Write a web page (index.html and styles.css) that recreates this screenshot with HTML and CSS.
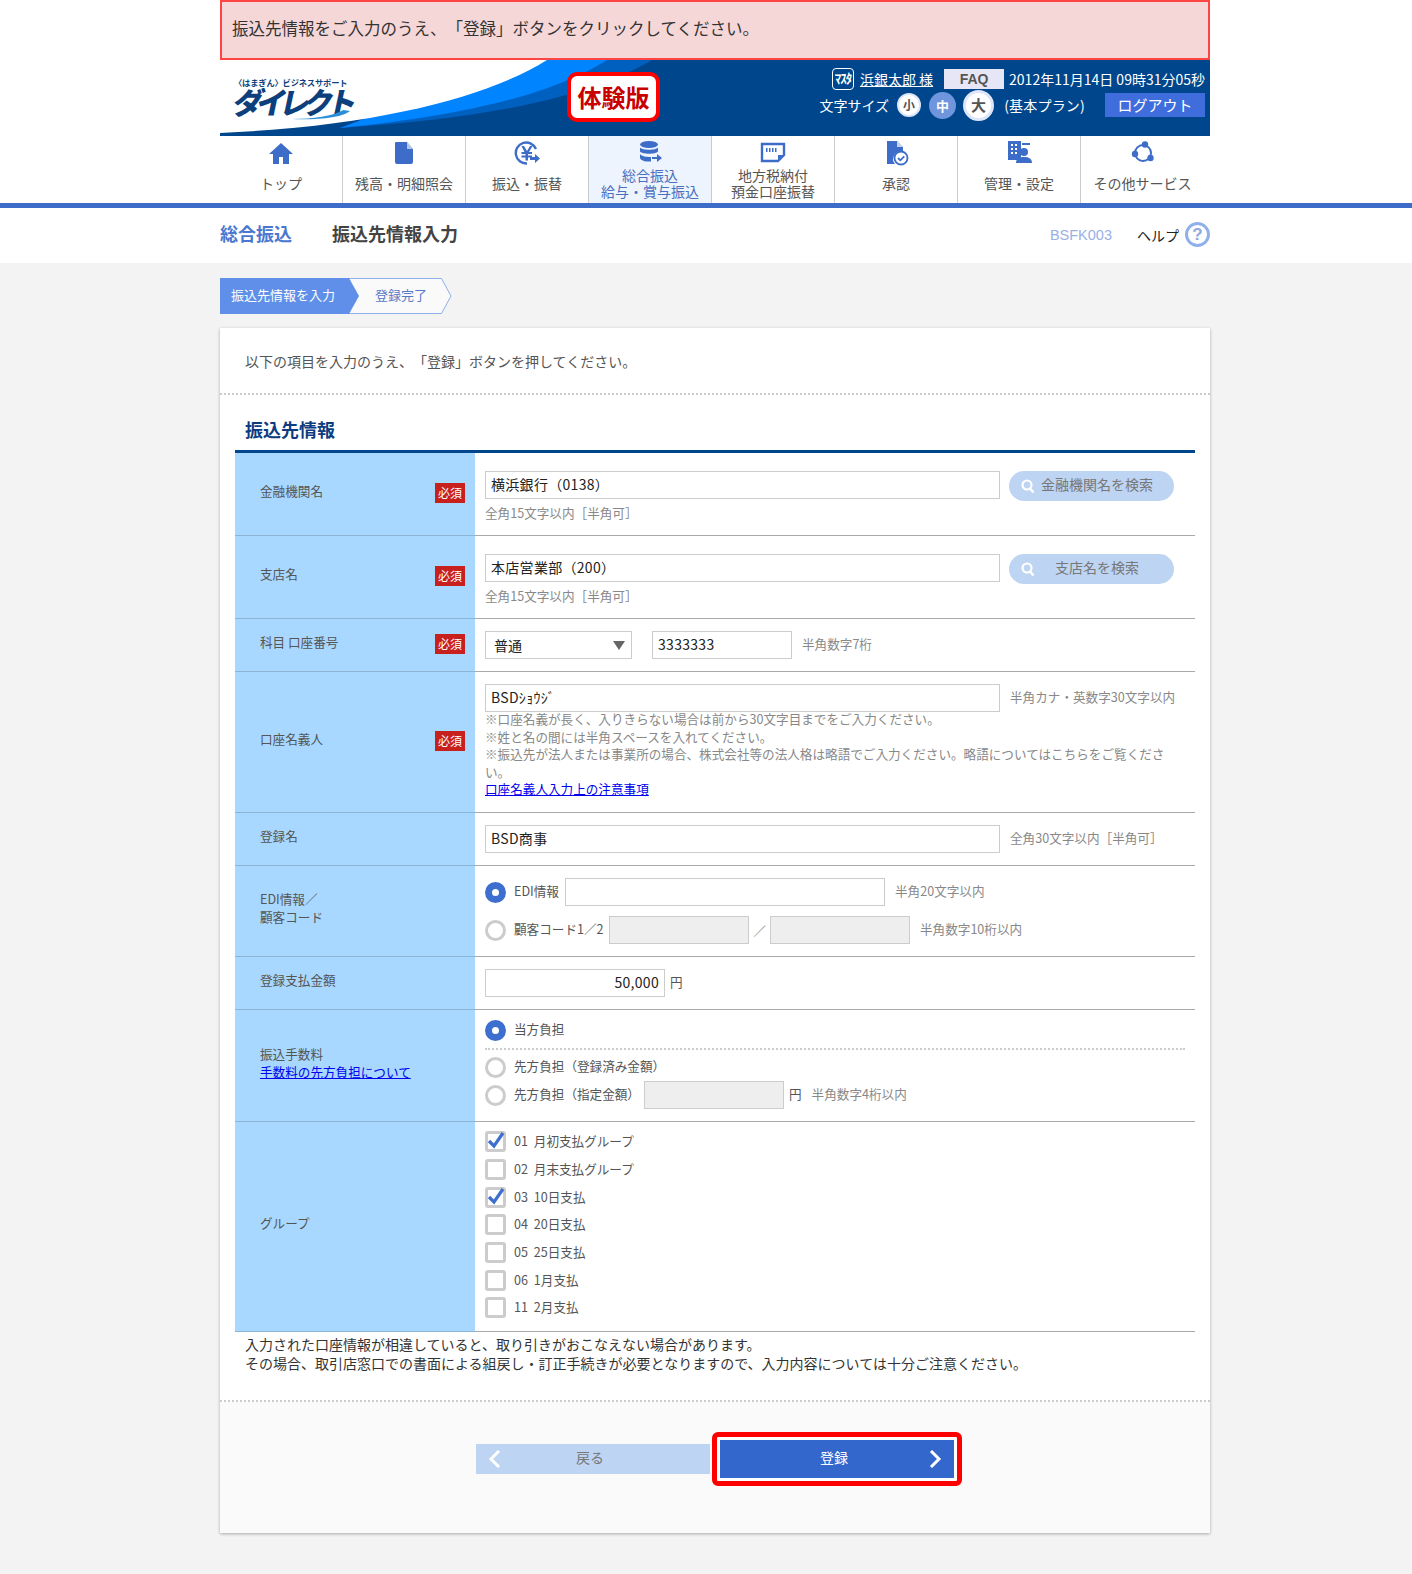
FILE: index.html
```html
<!DOCTYPE html>
<html lang="ja">
<head>
<meta charset="UTF-8">
<title>振込先情報入力</title>
<link rel="stylesheet" href="styles.css">
</head>
<body>
<div class="top">
    <div class="banner">振込先情報をご入力のうえ、「登録」ボタンをクリックしてください。</div>
    <header class="header">
        <svg class="swoosh" width="990" height="76" viewBox="0 0 990 76">
            <path fill="#0060c0" d="M300 0H432C380 30 300 56 120 68Z"/>
            <path fill="#0084ff" d="M300 0H387C340 30 260 54 120 68Z"/>
            <path fill="#fff" d="M0 0H327C270 36 160 66 0 73Z"/>
        </svg>
        <div class="logo">
            <div class="logo-small">〈はまぎん〉ビジネスサポート</div>
            <div class="logo-big">ダイレクト</div>
            <svg class="logo-line" width="58" height="10" viewBox="0 0 70 10" preserveAspectRatio="none"><path fill="#2a8fd8" d="M0 9C25 9 50 6 62 0L70 1C60 8 30 10 0 9Z"/></svg>
        </div>
        <div class="trial">体験版</div>
        <div class="header-right">
            <div class="header-row">
                <span class="master">ﾏｽﾀ</span>
                <a class="user" href="#">浜銀太郎 様</a>
                <span class="faq">FAQ</span>
                <span class="date">2012年11月14日 09時31分05秒</span>
            </div>
            <div class="header-row header-row2">
                <span>文字サイズ</span>
                <span class="size size-s">小</span>
                <span class="size size-m">中</span>
                <span class="size size-l">大</span>
                <span class="plan">(基本プラン)</span>
                <span class="logout">ログアウト</span>
            </div>
        </div>
    </header>
    <nav class="nav">
        <a class="nav-item">
            <svg class="nav-icon" viewBox="0 0 26 26"><path d="M13 3L1 14h4v10h6v-7h4v7h6V14h4z"/></svg>
            <span>トップ</span>
        </a>
        <a class="nav-item">
            <svg class="nav-icon" viewBox="0 0 26 26"><path d="M5 2h11l6 7v13a2 2 0 0 1-2 2H6a2 2 0 0 1-2-2V3a1 1 0 0 1 1-1z"/><path fill="#fff" d="M16 2v7h6z" opacity=".6"/></svg>
            <span>残高・明細照会</span>
        </a>
        <a class="nav-item">
            <svg class="nav-icon" viewBox="0 0 26 26"><path fill="none" stroke="#3e6cc9" stroke-width="2.4" d="M22 9A10.500 10.500 0 1 0 13 23.500"/><path d="M7.500 6h2.500l3 5 3-5h2.500l-3.500 6h3v2h-4v1.500h4v2h-4v3h-2.500v-3h-4v-2h4V14h-4v-2h3z"/><path d="M16 17h5v-3l5 4.500-5 4.500v-3h-5z"/></svg>
            <span>振込・振替</span>
        </a>
        <a class="nav-item nav-item-on">
            <svg class="nav-icon" viewBox="0 0 26 26"><ellipse cx="12" cy="4.500" rx="9" ry="3.500"/><path d="M3 7.500c2 3 16 3 18 0v4c-2 3-16 3-18 0zM3 14c2 3 9 3 11 3v4.500C10 22 4 21 3 18z"/><path d="M15 17h5v-3l5 4-5 4v-3h-5z"/></svg>
            <span>総合振込<br>給与・賞与振込</span>
        </a>
        <a class="nav-item">
            <svg class="nav-icon" viewBox="0 0 26 26"><path fill="none" stroke="#3e6cc9" stroke-width="2.400" d="M2 4h22v11l-6 6H2z"/><path d="M18 21v-6h6zM6 8h1.500v4H6zM9 8h1.500v4H9zM12 8h1.500v4H12zM15 8h1.500v4H15z"/></svg>
            <span>地方税納付<br>預金口座振替</span>
        </a>
        <a class="nav-item">
            <svg class="nav-icon" viewBox="0 0 26 26"><path d="M4 1h10l6 6v5a7.500 7.500 0 0 0-8 12H4z"/><path fill="#fff" d="M14 1v6h6z" opacity=".7"/><circle cx="18" cy="18" r="6.500" fill="none" stroke="#3e6cc9" stroke-width="1.800"/><path fill="none" stroke="#3e6cc9" stroke-width="1.800" d="M15 18l2.300 2.300 4-4"/></svg>
            <span>承認</span>
        </a>
        <a class="nav-item">
            <svg class="nav-icon" viewBox="0 0 26 26"><path d="M2 1h13v19H2z"/><path fill="#fff" d="M5 4h2v2H5zM9 4h2v2H9zM5 8h2v2H5zM9 8h2v2H9zM5 12h2v2H5zM9 12h2v2H9z"/><circle cx="18" cy="12" r="4"/><path d="M10 23c0-5 4-6 8-6s8 1 8 6z"/><path d="M16 3h8v2h-8z"/></svg>
            <span>管理・設定</span>
        </a>
        <a class="nav-item">
            <svg class="nav-icon" viewBox="0 0 26 26"><circle cx="13" cy="13" r="8" fill="none" stroke="#3e6cc9" stroke-width="2"/><circle cx="15" cy="4.500" r="3.200"/><circle cx="20.500" cy="18" r="3.200"/><circle cx="5" cy="14" r="3.200"/></svg>
            <span>その他サービス</span>
        </a>
    </nav>
    <div class="nav-line"></div>
    <div class="title-bar">
        <div class="title-in">
            <span class="title-cat">総合振込</span>
            <span class="title-main">振込先情報入力</span>
            <span class="screen-id">BSFK003</span>
            <span class="help">ヘルプ</span>
            <span class="help-icon">?</span>
        </div>
    </div>
</div>
<div class="steps">
    <svg class="steps-bg" width="232" height="36" viewBox="0 0 232 36">
        <path fill="#fafafa" stroke="#8fb0ea" d="M120 .5H221.500L231 18 221.500 35.500H120z"/>
        <path fill="#5f8fe8" d="M0 0H129L139 18 129 36H0z"/>
    </svg>
    <span class="step step-on">振込先情報を入力</span>
    <span class="step">登録完了</span>
</div>
<main class="card">
    <p class="intro">以下の項目を入力のうえ、「登録」ボタンを押してください。</p>
    <h2 class="section">振込先情報</h2>
    <div class="form">
        <div class="row">
            <div class="head"><span>金融機関名</span><em class="req">必須</em></div>
            <div class="cell">
                <div class="line line-search">
                    <input class="text text-long" value="横浜銀行（0138）">
                    <button class="search"><svg width="16" height="16" viewBox="0 0 16 16"><circle cx="7" cy="7" r="4.500" fill="none" stroke="#fff" stroke-width="2.200"/><path stroke="#fff" stroke-width="2.400" d="M10 10.500l3.500 4"/></svg><span>金融機関名を検索</span></button>
                </div>
                <div class="hint hint-under">全角15文字以内［半角可］</div>
            </div>
        </div>
        <div class="row">
            <div class="head"><span>支店名</span><em class="req">必須</em></div>
            <div class="cell">
                <div class="line line-search">
                    <input class="text text-long" value="本店営業部（200）">
                    <button class="search"><svg width="16" height="16" viewBox="0 0 16 16"><circle cx="7" cy="7" r="4.500" fill="none" stroke="#fff" stroke-width="2.200"/><path stroke="#fff" stroke-width="2.400" d="M10 10.500l3.500 4"/></svg><span>支店名を検索</span></button>
                </div>
                <div class="hint hint-under">全角15文字以内［半角可］</div>
            </div>
        </div>
        <div class="row">
            <div class="head"><span>科目 口座番号</span><em class="req">必須</em></div>
            <div class="cell cell-tight">
                <div class="line">
                    <div class="select">普通<i class="select-arrow"></i></div>
                    <input class="text text-num" value="3333333">
                    <span class="hint">半角数字7桁</span>
                </div>
            </div>
        </div>
        <div class="row">
            <div class="head"><span>口座名義人</span><em class="req">必須</em></div>
            <div class="cell cell-tight">
                <div class="line">
                    <input class="text text-long" value="BSDｼｮｳｼﾞ">
                    <span class="hint">半角カナ・英数字30文字以内</span>
                </div>
                <div class="notes">
                    ※口座名義が長く、入りきらない場合は前から30文字目までをご入力ください。<br>
                    ※姓と名の間には半角スペースを入れてください。<br>
                    ※振込先が法人または事業所の場合、株式会社等の法人格は略語でご入力ください。略語についてはこちらをご覧ください。<br>
                    <a href="#">口座名義人入力上の注意事項</a>
                </div>
            </div>
        </div>
        <div class="row">
            <div class="head"><span>登録名</span></div>
            <div class="cell cell-tight">
                <div class="line">
                    <input class="text text-long" value="BSD商事">
                    <span class="hint">全角30文字以内［半角可］</span>
                </div>
            </div>
        </div>
        <div class="row">
            <div class="head"><span>EDI情報／<br>顧客コード</span></div>
            <div class="cell cell-tight cell-stack">
                <div class="line line-radio">
                    <i class="radio radio-on"></i>
                    <span class="label label-edi">EDI情報</span>
                    <input class="text text-edi">
                    <span class="hint">半角20文字以内</span>
                </div>
                <div class="line line-radio">
                    <i class="radio"></i>
                    <span class="label label-code">顧客コード1／2</span>
                    <input class="text text-num off" disabled>
                    <span class="slash">／</span>
                    <input class="text text-num off" disabled>
                    <span class="hint">半角数字10桁以内</span>
                </div>
            </div>
        </div>
        <div class="row">
            <div class="head"><span>登録支払金額</span></div>
            <div class="cell cell-tight">
                <div class="line">
                    <input class="text text-amount" value="50,000">
                    <span class="label yen">円</span>
                </div>
            </div>
        </div>
        <div class="row">
            <div class="head"><span>振込手数料<br><a href="#">手数料の先方負担について</a></span></div>
            <div class="cell cell-fee">
                <div class="line line-radio line-short">
                    <i class="radio radio-on"></i>
                    <span class="label">当方負担</span>
                </div>
                <div class="dots"></div>
                <div class="line line-radio line-short">
                    <i class="radio"></i>
                    <span class="label">先方負担（登録済み金額）</span>
                </div>
                <div class="line line-radio line-fee">
                    <i class="radio"></i>
                    <span class="label label-fee">先方負担（指定金額）</span>
                    <input class="text text-num off" disabled>
                    <span class="label yen">円</span>
                    <span class="hint">半角数字4桁以内</span>
                </div>
            </div>
        </div>
        <div class="row">
            <div class="head"><span>グループ</span></div>
            <div class="cell cell-groups">
                <div class="group"><i class="check"><svg width="20" height="20" viewBox="0 0 20 20"><path fill="none" stroke="#3e6fce" stroke-width="3.200" d="M3 10l5 5 9-13"/></svg></i>01 月初支払グループ</div>
                <div class="group"><i class="check"></i>02 月末支払グループ</div>
                <div class="group"><i class="check"><svg width="20" height="20" viewBox="0 0 20 20"><path fill="none" stroke="#3e6fce" stroke-width="3.200" d="M3 10l5 5 9-13"/></svg></i>03 10日支払</div>
                <div class="group"><i class="check"></i>04 20日支払</div>
                <div class="group"><i class="check"></i>05 25日支払</div>
                <div class="group"><i class="check"></i>06 1月支払</div>
                <div class="group"><i class="check"></i>11 2月支払</div>
            </div>
        </div>
    </div>
    <p class="caution">入力された口座情報が相違していると、取り引きがおこなえない場合があります。<br>その場合、取引店窓口での書面による組戻し・訂正手続きが必要となりますので、入力内容については十分ご注意ください。</p>
    <div class="card-foot">
        <button class="btn btn-back"><svg width="14" height="18" viewBox="0 0 14 18"><path fill="none" stroke="#fff" stroke-width="3" d="M11 1L3 9l8 8"/></svg><span>戻る</span></button>
        <div class="btn-mark">
            <button class="btn btn-next"><span>登録</span><svg width="14" height="18" viewBox="0 0 14 18"><path fill="none" stroke="#fff" stroke-width="3" d="M3 1l8 8-8 8"/></svg></button>
        </div>
    </div>
</main>
</body>
</html>
```

FILE: styles.css
```css
* {
    box-sizing: border-box;
    text-spacing-trim: space-all;
}
body {
    margin: 0;
    background: #f3f3f3;
    font-family: "Noto Sans CJK JP", "Noto Sans", sans-serif;
    font-size: 12.6px;
    color: #555;
}
a {
    color: #0000ee;
}
.top {
    background: #fff;
}
.banner {
    width: 990px;
    height: 60px;
    margin-left: 220px;
    padding-left: 10px;
    border: 2px solid #f44;
    background: #f5d7d8;
    font-size: 16.5px;
    line-height: 53px;
    color: #333;
    white-space: nowrap;
}

/* header */
.header {
    position: relative;
    width: 990px;
    height: 76px;
    margin-left: 220px;
    background: #00468c;
    overflow: hidden;
}
.swoosh {
    position: absolute;
    left: 0;
    top: 0;
}
.logo {
    position: absolute;
    left: 14px;
    top: 16px;
    color: #0d3f7c;
    font-weight: 700;
}
.logo-small {
    font-size: 8.3px;
    line-height: 13px;
    letter-spacing: -.2px;
    white-space: nowrap;
}
.logo-big {
    font-size: 30px;
    line-height: 30px;
    margin-top: -3px;
    letter-spacing: -6.5px;
    transform: skewX(-12deg);
    font-weight: 900;
    white-space: nowrap;
}
.logo-line {
    position: absolute;
    left: 58px;
    top: 34px;
}
.trial {
    position: absolute;
    left: 347px;
    top: 12px;
    width: 93px;
    height: 50px;
    border: 4px solid #f00;
    border-radius: 10px;
    background: #fff;
    color: #c80000;
    font-size: 24px;
    font-weight: 700;
    line-height: 42px;
    text-align: center;
}
.header-right {
    position: absolute;
    right: 5px;
    top: 8px;
    color: #fff;
    font-size: 14px;
}
.header-row {
    display: flex;
    align-items: center;
    justify-content: flex-end;
    height: 22px;
    white-space: nowrap;
}
.header-row2 {
    height: 30px;
}
.master {
    width: 22px;
    height: 22px;
    margin-right: 6px;
    border: 1.5px solid #fff;
    border-radius: 4px;
    font-size: 13px;
    font-weight: 700;
    line-height: 18px;
    text-align: center;
    letter-spacing: -1px;
    overflow: hidden;
}
.user {
    color: #fff;
}
.faq {
    width: 60px;
    height: 20px;
    margin: 0 5px 0 11px;
    background: #e6e6f6;
    color: #555;
    font-family: "Liberation Sans", sans-serif;
    font-weight: 700;
    line-height: 21px;
    text-align: center;
}
.size {
    display: block;
    border-radius: 50%;
    background: #fff;
    color: #555;
    text-align: center;
    font-weight: 700;
}
.size-s {
    width: 24px;
    height: 24px;
    margin-left: 8px;
    border: 2px solid #dde6f8;
    font-size: 12px;
    line-height: 19px;
}
.size-m {
    width: 27px;
    height: 27px;
    margin-left: 8px;
    background: #6f96dc;
    color: #fff;
    font-size: 13px;
    line-height: 27px;
}
.size-l {
    width: 31px;
    height: 31px;
    margin-left: 7px;
    border: 3px solid #dde6f8;
    font-size: 15px;
    line-height: 24px;
}
.plan {
    margin-left: 10px;
    letter-spacing: .2px;
}
.logout {
    width: 100px;
    height: 24px;
    margin-left: 20px;
    background: #3f6ddc;
    font-size: 15px;
    line-height: 23px;
    text-align: center;
}

/* nav */
.nav {
    display: flex;
    width: 990px;
    height: 67px;
    margin-left: 220px;
    background: #fff;
}
.nav-item {
    position: relative;
    flex: 0 0 123px;
    border-right: 1px solid #ccc;
    color: #555;
    font-size: 14px;
    line-height: 16px;
    text-align: center;
    white-space: nowrap;
}
.nav-item:last-child {
    border-right: none;
}
.nav-item span {
    display: flex;
    align-items: center;
    justify-content: center;
    height: 32px;
    margin-top: 31px;
}
.nav-item-on {
    background: #edf4fd;
    color: #4a6fc0;
}
.nav-icon {
    position: absolute;
    left: 50%;
    top: 4px;
    width: 26px;
    height: 26px;
    margin-left: -13px;
    fill: #3e6cc9;
}
.nav-line {
    height: 5px;
    background: #3e6cc9;
}
.title-bar {
    height: 55px;
}
.title-in {
    display: flex;
    align-items: center;
    width: 990px;
    height: 53px;
    margin-left: 220px;
}
.title-cat {
    margin-top: -3px;
    color: #4a78d0;
    font-size: 18px;
    font-weight: 700;
}
.title-main {
    flex: 1;
    margin: -3px 0 0 40px;
    color: #444;
    font-size: 18px;
    font-weight: 700;
}
.screen-id {
    color: #9ab0e6;
    font-size: 14.500px;
    font-family: "Liberation Sans", sans-serif;
}
.help {
    margin-left: 25px;
    color: #222;
    font-size: 14px;
}
.help-icon {
    width: 25px;
    height: 25px;
    margin-left: 6px;
    border: 3px solid #8fb0ea;
    border-radius: 50%;
    color: #8fa8de;
    font-family: "Liberation Sans", sans-serif;
    font-size: 17px;
    font-weight: 700;
    line-height: 19px;
    text-align: center;
}

/* steps */
.steps {
    position: relative;
    display: flex;
    width: 990px;
    height: 36px;
    margin: 15px 0 14px 220px;
    font-size: 13px;
    line-height: 33px;
}
.steps-bg {
    position: absolute;
    left: 0;
    top: 0;
}
.step {
    position: relative;
    margin-left: 26px;
    color: #5578c5;
}
.step-on {
    margin-left: 11px;
    margin-right: 14px;
    color: #fff;
}

/* card */
.card {
    display: flex;
    flex-direction: column;
    width: 990px;
    height: 1205px;
    margin: 0 0 41px 220px;
    background: #fff;
    box-shadow: 0 1px 3px rgba(0, 0, 0, .3);
}
.intro {
    height: 67px;
    margin: 0;
    padding: 22px 25px 0;
    border-bottom: 2px dotted #ccc;
    font-size: 14px;
    line-height: 22px;
}
.section {
    height: 58px;
    margin: 0 15px;
    padding: 22px 10px 0;
    border-bottom: 3px solid #00468c;
    color: #0d3c80;
    font-size: 18px;
    line-height: 24px;
}
.form {
    margin: 0 15px;
    color: #555;
}
.row {
    display: grid;
    grid-template-columns: 240px 1fr;
}
.head {
    display: flex;
    align-items: center;
    justify-content: space-between;
    padding: 0 10px 6px 25px;
    border-bottom: 1px solid #8db4d4;
    background: #a8d8ff;
    line-height: 18px;
}
.req {
    width: 30px;
    height: 20px;
    margin-top: 4px;
    background: #c8201c;
    color: #fff;
    font-size: 12px;
    font-style: normal;
    line-height: 20px;
    text-align: center;
}
.cell {
    padding: 18px 10px 13px;
    border-bottom: 1px solid #aaa;
}
.cell-tight {
    padding: 12px 10px 12px;
}
.cell-stack .line + .line {
    margin-top: 10px;
}
.cell-fee {
    padding: 10px 10px 12px;
}
.cell-groups {
    padding: 6px 10px 9px;
}
.line {
    display: flex;
    align-items: center;
    height: 28px;
}
.line-search {
    height: 30px;
    align-items: flex-start;
}
.line-short {
    height: 21px;
}
.line-fee {
    margin-top: 3px;
}
.text {
    height: 28px;
    padding: 0 5px 2px;
    border: 1px solid #ccc;
    background: #fff;
    color: #222;
    font-family: "Noto Sans CJK JP", sans-serif;
    font-size: 14px;
    letter-spacing: .3px;
}
.text-long {
    width: 515px;
}
.text-num {
    width: 140px;
}
.text-edi {
    width: 320px;
}
.text-amount {
    width: 180px;
    text-align: right;
}
.off {
    background: #eee;
}
.hint {
    margin: -4px 0 0 10px;
    color: #888;
    white-space: nowrap;
}
.hint-under {
    height: 18px;
    margin: 3px 0 0;
    line-height: 18px;
}
.search {
    display: flex;
    align-items: center;
    width: 165px;
    height: 30px;
    margin-left: 9px;
    padding: 0 16px 0 11px;
    border: none;
    border-radius: 15px;
    background: #bdd4f3;
    color: #777;
    font-family: "Noto Sans CJK JP", sans-serif;
    font-size: 14px;
}
.search span {
    flex: 1;
    margin-top: -4px;
    text-align: center;
}
.select {
    position: relative;
    width: 147px;
    height: 28px;
    margin-right: 20px;
    padding-left: 8px;
    border: 1px solid #ccc;
    color: #222;
    font-size: 14px;
    line-height: 26px;
}
.select-arrow {
    position: absolute;
    right: 6px;
    top: 9px;
    border-top: 9px solid #666;
    border-left: 6px solid transparent;
    border-right: 6px solid transparent;
}
.notes {
    max-width: 690px;
    margin: -2px 0 2.500px;
    color: #888;
    line-height: 17.500px;
}
.radio {
    flex: none;
    width: 21px;
    height: 21px;
    margin-right: 8px;
    border: 3px solid #ccc;
    border-radius: 50%;
    background: #fff;
}
.radio-on {
    border: 7px solid #3e6fce;
}
.label {
    margin-top: -4px;
    color: #555;
    white-space: nowrap;
}
.label-edi {
    width: 51px;
}
.label-code {
    width: 95px;
}
.label-fee {
    width: 130px;
}
.yen {
    margin-left: 5px;
}
.slash {
    width: 21px;
    color: #777;
    text-align: center;
}
.dots {
    height: 9px;
    margin-bottom: 7px;
    border-bottom: 2px dotted #ccc;
}
.group {
    display: flex;
    align-items: center;
    height: 27.700px;
    padding-bottom: 2px;
    word-spacing: 3px;
}
.check {
    position: relative;
    flex: none;
    width: 21px;
    height: 21px;
    margin: 2px 8px 0 0;
    border: 3px solid #ccc;
    border-radius: 3px;
    background: #fff;
}
.check svg {
    position: absolute;
    left: -2px;
    top: -3px;
}
.caution {
    margin: 0;
    padding: 3px 25px 27px;
    border-bottom: 2px dotted #ccc;
    color: #333;
    font-size: 14px;
    line-height: 19px;
}
.card-foot {
    flex: 1;
    display: flex;
    align-items: flex-start;
    padding: 30px 0 0 256px;
    background: #fafafa;
}
.btn {
    display: flex;
    align-items: center;
    width: 234px;
    padding: 0 12px;
    border: none;
    font-family: "Noto Sans CJK JP", sans-serif;
    font-size: 14px;
}
.btn span {
    flex: 1;
    margin-top: -4px;
    text-align: center;
}
.btn-back {
    height: 30px;
    margin-top: 12px;
    background: #bdd4f3;
    color: #777;
}
.btn-back span {
    padding-right: 20px;
}
.btn-mark {
    width: 250px;
    height: 54px;
    margin-left: 2px;
    padding: 3px;
    border: 5px solid #f00;
    border-radius: 6px;
    background: #fff;
}
.btn-next {
    height: 38px;
    background: #3367cc;
    color: #fff;
}
.btn-next span {
    padding-left: 8px;
}
```
